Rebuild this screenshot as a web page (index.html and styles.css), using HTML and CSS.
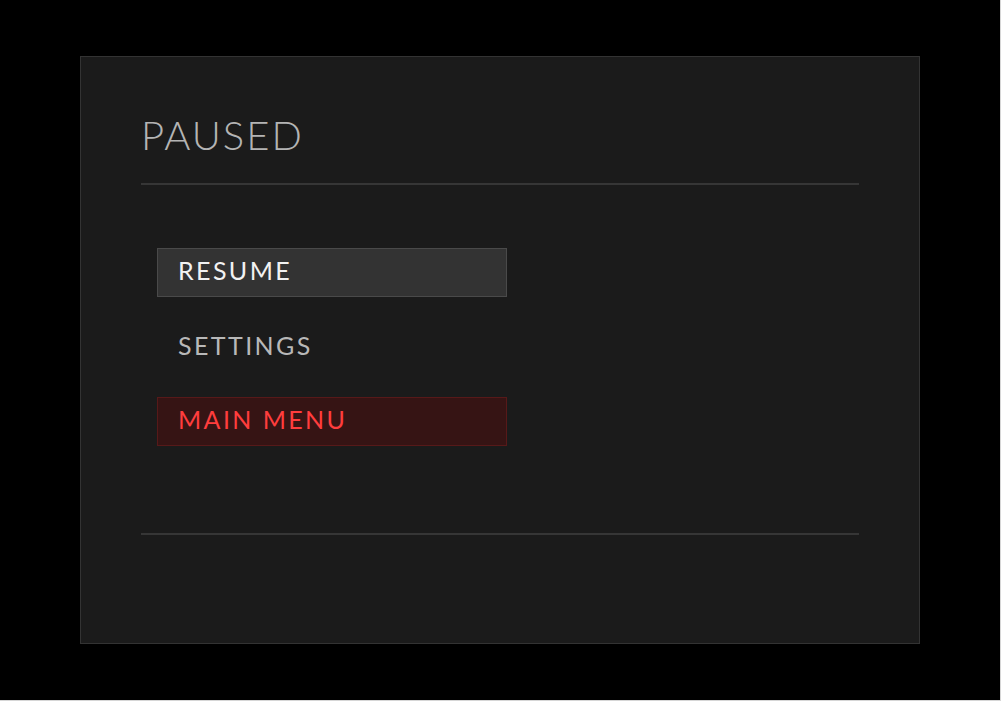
FILE: index.html
```html
<!DOCTYPE html>
<html lang="en">
<head>
<meta charset="utf-8">
<title>Paused</title>
<link rel="stylesheet" href="styles.css">
</head>
<body>
<div class="stage">
  <section class="pause-panel">
    <h1 class="pause-title">PAUSED</h1>
    <hr class="rule">
    <nav class="pause-menu">
      <button class="menu-item is-active">RESUME</button>
      <button class="menu-item">SETTINGS</button>
      <button class="menu-item is-danger">MAIN MENU</button>
    </nav>
    <hr class="rule">
    <div class="pause-footer"></div>
  </section>
</div>
</body>
</html>
```
FILE: styles.css
```css
html {
  background: #d6d6d6;
}
body {
  margin: 0;
  font-family: "Lato", "Noto Sans", sans-serif;
}
.stage {
  width: 1000px;
  height: 700px;
  background: #000;
  display: flex;
  align-items: center;
  justify-content: center;
}
.pause-panel {
  box-sizing: border-box;
  width: 840px;
  height: 588px;
  background: #1b1b1b;
  border: 1px solid #333;
  padding: 60px;
  display: flex;
  flex-direction: column;
}
.pause-title {
  margin: 0 0 30px;
  font-size: 40px;
  line-height: 36px;
  font-weight: 300;
  letter-spacing: 2px;
  color: #b4b4b4;
}
.rule {
  margin: 0;
  border: 0;
  height: 2px;
  background: #363636;
}
.pause-menu {
  display: flex;
  flex-direction: column;
  gap: 25.5px;
  margin: 63px 16px 87px;
}
.menu-item {
  box-sizing: border-box;
  width: 350px;
  height: 49px;
  padding: 0 20px 5px;
  text-align: left;
  font-family: inherit;
  font-size: 25px;
  letter-spacing: 2.4px;
  background: transparent;
  border: 1px solid transparent;
  color: #b8b8b8;
}
.menu-item.is-active {
  background: #333;
  border-color: #4a4a4a;
  color: #f2f2f2;
}
.menu-item.is-danger {
  background: #361414;
  border-color: #571919;
  color: #ff3d3d;
}
```
